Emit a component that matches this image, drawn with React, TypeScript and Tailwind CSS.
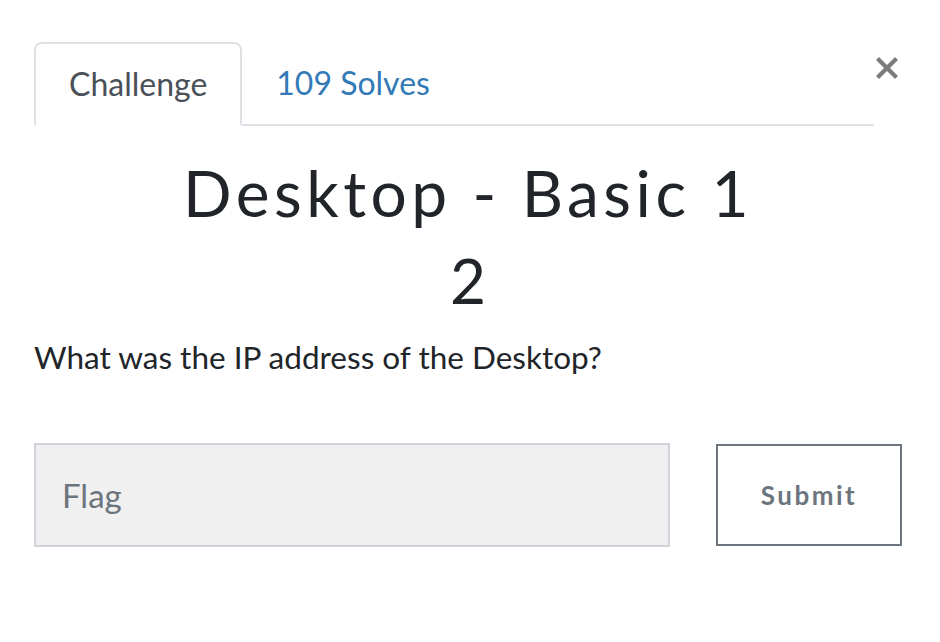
export default function App() {
  return (
    <div className="relative h-[642px] w-[940px] bg-white font-['Lato',sans-serif] text-[#212529]">
      <button
        type="button"
        className="absolute left-[874px] top-[55px] flex h-[26px] w-[26px] items-center justify-center text-[#7b7b7b]"
      >
        <svg width="22" height="22" viewBox="0 0 22 22">
          <path d="M3 3 L19 19 M19 3 L3 19" stroke="currentColor" strokeWidth="4.2" strokeLinecap="square" />
        </svg>
      </button>

      <div className="pl-[34px] pr-[38px] pt-[42px]">
        <div className="flex w-[840px] border-b-2 border-[#dee2e6]">
          <div className="-mb-[2px] flex h-[84px] items-center rounded-t-[8px] border-2 border-[#dee2e6] border-b-white bg-white px-[33px] text-[32px] text-[#495057]">
            Challenge
          </div>
          <div className="flex h-[82px] items-center px-[34px] text-[32px] text-[#337ab7]">
            109 Solves
          </div>
        </div>

        <h3 className="mt-[27px] text-center text-[64px] font-normal leading-[80px] tracking-[4.5px]">
          Desktop - Basic 1
        </h3>
        <h4 className="mt-[12px] text-center text-[62px] font-normal leading-[70px]">2</h4>

        <p className="mt-[20px] text-[31.5px] leading-[44px]">
          What was the IP address of the Desktop?
        </p>

        <div className="mt-[64px] flex items-center gap-[46px]">
          <input
            placeholder="Flag"
            className="h-[104px] w-[636px] border-2 border-[#ced4da] bg-[#f0f0f0] px-[26px] text-[33px] text-[#495057] outline-none placeholder:text-[#6c757d]"
          />
          <button
            type="button"
            className="h-[102px] w-[186px] border-2 border-[#6c757d] bg-white text-[26px] font-bold tracking-[2.5px] text-[#6c757d]"
          >
            Submit
          </button>
        </div>
      </div>
    </div>
  );
}
